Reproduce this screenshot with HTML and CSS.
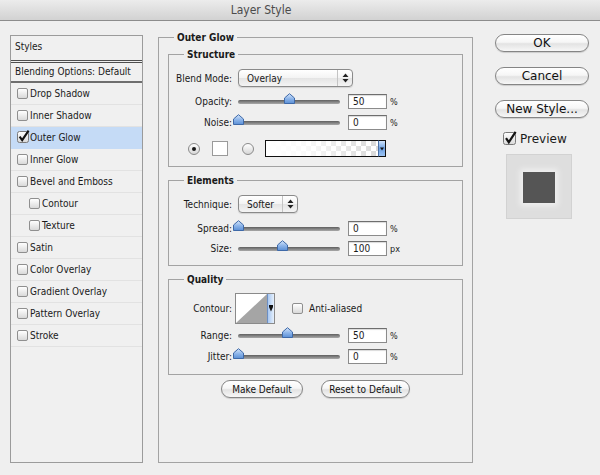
FILE: index.html
```html
<!DOCTYPE html>
<html>
<head>
<meta charset="utf-8">
<title>Layer Style</title>
<link rel="stylesheet" href="styles.css">
</head>
<body>
<svg width="0" height="0" class="defs">
  <defs>
    <linearGradient id="thumbGrad" x1="0" y1="0" x2="0" y2="1">
      <stop offset="0" stop-color="#d6e6fb"/>
      <stop offset="0.5" stop-color="#8fb6ea"/>
      <stop offset="1" stop-color="#5a8fd6"/>
    </linearGradient>
    <linearGradient id="boxGrad" x1="0" y1="0" x2="0" y2="1">
      <stop offset="0" stop-color="#ffffff"/>
      <stop offset="1" stop-color="#d9d9d9"/>
    </linearGradient>
  </defs>
</svg>
<div class="window">
  <header class="titlebar">Layer Style</header>
  <div class="layout">
    <aside class="styles-list">
      <div class="list-head">Styles</div>
      <div class="list-blend">Blending Options: Default</div>
      <ul class="effects">
        <li><span class="cb"></span>Drop Shadow</li>
        <li><span class="cb"></span>Inner Shadow</li>
        <li class="active"><svg class="cb-checked" width="13" height="13" viewBox="0 0 13 13"><rect x="0.5" y="1.5" width="11" height="11" rx="2" fill="url(#boxGrad)" stroke="#7a7a7a"/><path d="M2.6 6.6 L5.2 10.2 L11.6 0.6" fill="none" stroke="#121212" stroke-width="2.1"/></svg>Outer Glow</li>
        <li><span class="cb"></span>Inner Glow</li>
        <li><span class="cb"></span>Bevel and Emboss</li>
        <li class="sub"><span class="cb"></span>Contour</li>
        <li class="sub"><span class="cb"></span>Texture</li>
        <li><span class="cb"></span>Satin</li>
        <li><span class="cb"></span>Color Overlay</li>
        <li><span class="cb"></span>Gradient Overlay</li>
        <li><span class="cb"></span>Pattern Overlay</li>
        <li><span class="cb"></span>Stroke</li>
      </ul>
    </aside>

    <fieldset class="panel">
      <legend class="panel-legend">Outer Glow</legend>

      <fieldset class="group group-structure">
        <legend>Structure</legend>
        <div class="row row-select">
          <span class="lbl">Blend Mode:</span>
          <div class="select select-blend"><span class="select-text">Overlay</span><span class="select-arrows"><svg width="7" height="10" viewBox="0 0 7 10"><path d="M3.5 0.5 L6.5 4 L0.5 4 Z M3.5 9.5 L6.5 6 L0.5 6 Z" fill="#222"/></svg></span></div>
        </div>
        <div class="row row-opacity">
          <span class="lbl">Opacity:</span>
          <div class="slider"><span class="track"></span><svg class="thumb" style="left: 50%" width="11" height="11" viewBox="0 0 11 11"><path d="M0.5 5 L5.5 0.7 L10.5 5 L10.5 10.5 L0.5 10.5 Z" fill="url(#thumbGrad)" stroke="#3e69a8"/></svg></div>
          <span class="num">50</span><span class="unit">%</span>
        </div>
        <div class="row row-noise">
          <span class="lbl">Noise:</span>
          <div class="slider"><span class="track"></span><svg class="thumb" style="left: 0%" width="11" height="11" viewBox="0 0 11 11"><path d="M0.5 5 L5.5 0.7 L10.5 5 L10.5 10.5 L0.5 10.5 Z" fill="url(#thumbGrad)" stroke="#3e69a8"/></svg></div>
          <span class="num">0</span><span class="unit">%</span>
        </div>
        <div class="row row-color">
          <span class="radio radio-on"></span>
          <span class="swatch"></span>
          <span class="radio"></span>
          <span class="gradient-box"></span><span class="drop-btn"><svg width="4" height="4" viewBox="0 0 4 4"><path d="M0 0.5 L4 0.5 L2 3.5 Z" fill="#111"/></svg></span>
        </div>
      </fieldset>

      <fieldset class="group group-elements">
        <legend>Elements</legend>
        <div class="row row-select">
          <span class="lbl">Technique:</span>
          <div class="select select-tech"><span class="select-text">Softer</span><span class="select-arrows"><svg width="7" height="10" viewBox="0 0 7 10"><path d="M3.5 0.5 L6.5 4 L0.5 4 Z M3.5 9.5 L6.5 6 L0.5 6 Z" fill="#222"/></svg></span></div>
        </div>
        <div class="row row-spread">
          <span class="lbl">Spread:</span>
          <div class="slider"><span class="track"></span><svg class="thumb" style="left: 0%" width="11" height="11" viewBox="0 0 11 11"><path d="M0.5 5 L5.5 0.7 L10.5 5 L10.5 10.5 L0.5 10.5 Z" fill="url(#thumbGrad)" stroke="#3e69a8"/></svg></div>
          <span class="num">0</span><span class="unit">%</span>
        </div>
        <div class="row row-size">
          <span class="lbl">Size:</span>
          <div class="slider"><span class="track"></span><svg class="thumb" style="left: 44%" width="11" height="11" viewBox="0 0 11 11"><path d="M0.5 5 L5.5 0.7 L10.5 5 L10.5 10.5 L0.5 10.5 Z" fill="url(#thumbGrad)" stroke="#3e69a8"/></svg></div>
          <span class="num">100</span><span class="unit">px</span>
        </div>
      </fieldset>

      <fieldset class="group group-quality">
        <legend>Quality</legend>
        <div class="row row-contour">
          <span class="lbl lbl-contour">Contour:</span>
          <div class="contour">
            <svg class="contour-graph" width="31" height="29" viewBox="0 0 31 29"><rect width="31" height="29" fill="#fff"/><path d="M0 29 L31 0 L31 29 Z" fill="#a5a5a5"/></svg>
            <span class="contour-drop"><svg width="4" height="7" viewBox="0 0 4 7"><path d="M0 0 L4 0 L4 2 L2 6.5 L0 2 Z" fill="#111"/></svg></span>
          </div>
          <span class="cb cb-aa"></span>
          <span class="aa-label">Anti-aliased</span>
        </div>
        <div class="row row-range">
          <span class="lbl">Range:</span>
          <div class="slider"><span class="track"></span><svg class="thumb" style="left: 49%" width="11" height="11" viewBox="0 0 11 11"><path d="M0.5 5 L5.5 0.7 L10.5 5 L10.5 10.5 L0.5 10.5 Z" fill="url(#thumbGrad)" stroke="#3e69a8"/></svg></div>
          <span class="num">50</span><span class="unit">%</span>
        </div>
        <div class="row row-jitter">
          <span class="lbl">Jitter:</span>
          <div class="slider"><span class="track"></span><svg class="thumb" style="left: 0%" width="11" height="11" viewBox="0 0 11 11"><path d="M0.5 5 L5.5 0.7 L10.5 5 L10.5 10.5 L0.5 10.5 Z" fill="url(#thumbGrad)" stroke="#3e69a8"/></svg></div>
          <span class="num">0</span><span class="unit">%</span>
        </div>
      </fieldset>

      <div class="default-buttons">
        <button class="pill pill-small btn-make">Make Default</button>
        <button class="pill pill-small btn-reset">Reset to Default</button>
      </div>
    </fieldset>

    <div class="actions">
      <button class="pill pill-big btn-ok">OK</button>
      <button class="pill pill-big">Cancel</button>
      <button class="pill pill-big">New Style...</button>
      <label class="preview-check"><svg width="14" height="14" viewBox="0 0 14 14"><rect x="0.5" y="1.5" width="12" height="12" rx="2" fill="url(#boxGrad)" stroke="#7a7a7a"/><path d="M3 7.2 L5.8 11.2 L12.6 0.8" fill="none" stroke="#121212" stroke-width="2.2"/></svg><span>Preview</span></label>
      <div class="preview-box"><div class="preview-square"></div></div>
    </div>
  </div>
</div>
</body>
</html>
```

FILE: styles.css
```css
* {
  box-sizing: border-box;
}

html,
body {
  margin: 0;
  padding: 0;
}

body {
  width: 600px;
  height: 475px;
  overflow: hidden;
  background: #efefef;
  font-family: "DejaVu Sans Condensed", "DejaVu Sans", sans-serif;
  font-size: 10px;
  color: #1a1a1a;
}

.defs {
  position: absolute;
  width: 0;
  height: 0;
}

.window {
  width: 600px;
  height: 475px;
}

.titlebar {
  height: 21px;
  border-bottom: 1px solid #8c8c8c;
  background: linear-gradient(#ececec, #d2d2d2);
  font-size: 12px;
  line-height: 20px;
  color: #4b4b4b;
  text-align: center;
  padding-right: 78px;
}

.layout {
  display: flex;
  align-items: flex-start;
  padding-left: 10px;
}

/* ---------- left list ---------- */
.styles-list {
  width: 133px;
  height: 428px;
  margin-top: 14px;
  border: 1px solid #9b9b9b;
  background: #f0f0f0;
}

.list-head {
  height: 27px;
  border-bottom: 3px double #4e4e4e;
  padding-left: 4px;
  line-height: 22px;
}

.list-blend {
  height: 20px;
  border-bottom: 2px solid #6e6e6e;
  padding-left: 4px;
  line-height: 18px;
}

.effects {
  list-style: none;
  margin: 0;
  padding: 0;
}

.effects li {
  display: flex;
  align-items: center;
  height: 22px;
  border-bottom: 1px solid #e2e2e2;
  padding-left: 6px;
}

.effects li.sub {
  padding-left: 18px;
}

.effects li.active {
  background: #c5dbf6;
  border-bottom-color: #c5dbf6;
}

.cb {
  display: inline-block;
  width: 11px;
  height: 11px;
  border: 1px solid #8f8f8f;
  border-radius: 2px;
  background: linear-gradient(#ffffff, #d9d9d9);
  margin-right: 2px;
  flex: none;
}

.cb-checked {
  margin-top: -2px;
  margin-right: 0;
  flex: none;
}

/* ---------- main panel ---------- */
.panel {
  width: 315px;
  height: 432px;
  margin: 10px 0 0 15px;
  border: 1px solid #a3a3a3;
  padding: 4px 9px 0;
  min-width: 0;
}

legend {
  font-weight: bold;
  line-height: 13px;
  padding: 0 3px;
}

.panel-legend {
  margin-left: 6px;
}

.group {
  margin: 0;
  border: 1px solid #a3a3a3;
  padding: 8px 0 9px;
  min-width: 0;
}

.group legend {
  margin-left: 15px;
}

.group-elements {
  margin-top: 7px;
}

.group-quality {
  margin-top: 7px;
  padding-top: 7px;
  padding-bottom: 10px;
}

.row {
  display: flex;
  align-items: center;
}

.lbl {
  width: 63px;
  text-align: right;
  margin-right: 6px;
  flex: none;
}

.row-select {
  height: 18px;
}

.row-opacity {
  margin-top: 7px;
  height: 15px;
}

.row-noise {
  margin-top: 6px;
  height: 15px;
}

.row-color {
  margin-top: 10px;
  height: 17px;
  padding-left: 19px;
}

.row-spread {
  margin-top: 8px;
  height: 15px;
}

.row-size {
  margin-top: 5px;
  height: 15px;
}

.row-contour {
  height: 31px;
}

.row-range {
  margin-top: 4px;
  height: 15px;
}

.row-jitter {
  margin-top: 6px;
  height: 15px;
}

/* select popups */
.select {
  display: flex;
  align-items: center;
  height: 18px;
  border: 1px solid #8a8a8a;
  border-radius: 4px;
  background: linear-gradient(#ffffff 0%, #f3f3f3 50%, #e4e4e4 51%, #f4f4f4 100%);
  box-shadow: 0 1px 1px rgba(0, 0, 0, 0.12);
}

.select-blend {
  width: 115px;
}

.select-tech {
  width: 60px;
}

.select-text {
  flex: 1;
  padding-left: 8px;
}

.select-arrows {
  width: 15px;
  height: 100%;
  border-left: 1px solid #c4c4c4;
  display: flex;
  align-items: center;
  justify-content: center;
}

.select-arrows svg {
  display: block;
}

/* sliders */
.slider {
  position: relative;
  width: 102px;
  height: 15px;
  flex: none;
}

.track {
  position: absolute;
  left: 0;
  right: 0;
  top: 6px;
  height: 4px;
  border-radius: 2px;
  background: linear-gradient(#5f5f5f, #a9a9a9);
}

.thumb {
  position: absolute;
  top: -1px;
  margin-left: -5.5px;
  display: block;
}

.num {
  width: 39px;
  height: 15px;
  margin-left: 8px;
  border: 1px solid #8b8b8b;
  border-top-color: #6e6e6e;
  background: #fff;
  padding-left: 4px;
  line-height: 13px;
  box-shadow: inset 0 1px 1px rgba(0, 0, 0, 0.15);
  flex: none;
}

.unit {
  margin-left: 3px;
  font-size: 9px;
}

/* color row */
.radio {
  width: 12px;
  height: 12px;
  border: 1px solid #8a8a8a;
  border-radius: 50%;
  background: linear-gradient(#ffffff, #d6d6d6);
  margin-right: 11px;
  display: flex;
  align-items: center;
  justify-content: center;
  flex: none;
}

.radio-on {
  margin-right: 12px;
}

.radio-on::after {
  content: "";
  width: 4px;
  height: 4px;
  border-radius: 50%;
  background: #1a1a1a;
}

.swatch {
  width: 16px;
  height: 15px;
  border: 1px solid #9a9a9a;
  background: #fff;
  margin-right: 14px;
  flex: none;
}

.gradient-box {
  width: 113px;
  height: 17px;
  border: 1px solid #111;
  border-right: none;
  background:
    linear-gradient(to right, #ffffff 0%, rgba(255, 255, 255, 0.85) 35%, rgba(255, 255, 255, 0) 100%),
    repeating-conic-gradient(#d9d9d9 0 25%, #ffffff 0 50%) 0 0 / 10px 10px;
  flex: none;
}

.drop-btn {
  width: 8px;
  height: 17px;
  border: 1px solid #111;
  border-left: 1px solid #4a6fa5;
  background: linear-gradient(#cfe2fa, #6ea2e4 50%, #9cc3f2);
  display: flex;
  align-items: center;
  justify-content: center;
  flex: none;
}

.drop-btn svg,
.contour-drop svg {
  display: block;
}

/* contour */
.lbl-contour {
  margin-right: 3px;
}

.contour {
  display: flex;
  width: 40px;
  height: 31px;
  border: 1px solid #8a8a8a;
  background: #fff;
  flex: none;
}

.contour-graph {
  display: block;
}

.contour-drop {
  width: 7px;
  height: 29px;
  border-left: 1px solid #6c8fc4;
  background: linear-gradient(to right, #a9c8f1, #e6f0fc);
  display: flex;
  align-items: center;
  justify-content: center;
}

.cb-aa {
  margin-left: 17px;
  margin-right: 0;
}

.aa-label {
  margin-left: 6px;
}

/* pill buttons */
.pill {
  font-family: inherit;
  color: #111;
  border: 1px solid #858585;
  border-radius: 10px;
  background: linear-gradient(#ffffff 0%, #f6f6f6 45%, #e3e3e3 55%, #f7f7f7 100%);
  box-shadow: 0 1px 1px rgba(0, 0, 0, 0.15);
  padding: 0;
  cursor: default;
}

.pill-small {
  height: 18px;
  font-size: 10px;
  line-height: 15px;
}

.btn-make {
  width: 82px;
}

.btn-reset {
  width: 89px;
}

.default-buttons {
  display: flex;
  justify-content: center;
  gap: 18px;
  margin-top: 5px;
}

/* right column */
.actions {
  width: 94px;
  margin: 13px 0 0 22px;
  display: flex;
  flex-direction: column;
}

.pill-big {
  height: 18px;
  width: 94px;
  font-family: "DejaVu Sans", sans-serif;
  font-size: 12px;
  line-height: 15px;
  margin-bottom: 15px;
}

.preview-check {
  display: flex;
  align-items: center;
  margin-top: -2px;
  margin-left: 8px;
  height: 15px;
  font-family: "DejaVu Sans", sans-serif;
  font-size: 12px;
}

.preview-check svg {
  display: block;
  margin-right: 3px;
  margin-top: -2px;
}

.preview-box {
  width: 66px;
  height: 65px;
  margin: 8px 0 0 11px;
  background: #dedede;
  border: 1px solid #d2d2d2;
  display: flex;
  align-items: center;
  justify-content: center;
}

.preview-square {
  width: 32px;
  height: 31px;
  margin-top: 2px;
  background: #555555;
  box-shadow: 0 0 6px 3px rgba(255, 255, 255, 0.55);
}
```
